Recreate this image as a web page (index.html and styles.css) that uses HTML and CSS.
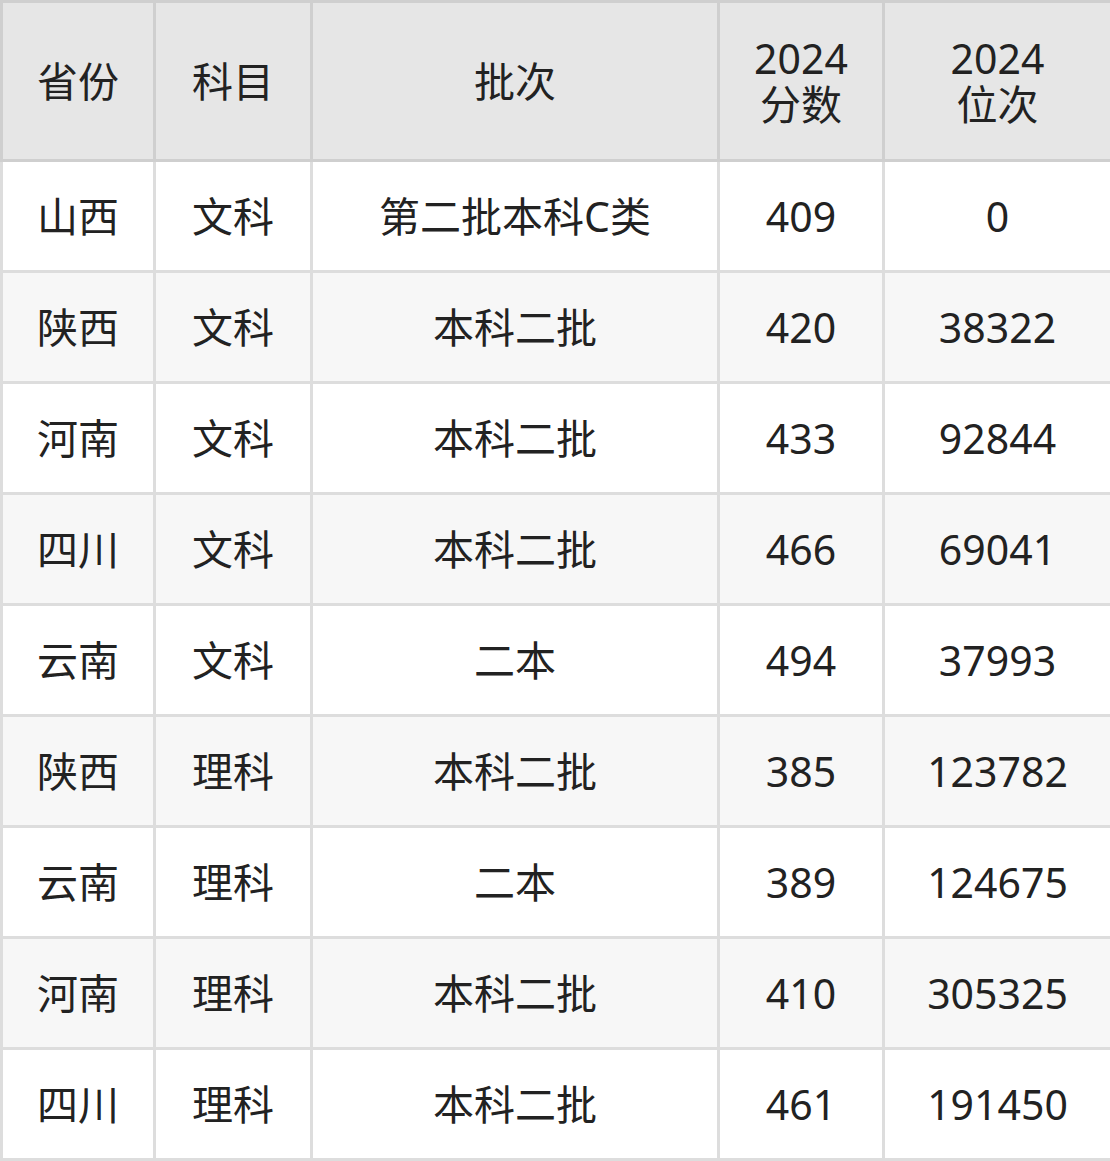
FILE: index.html
```html
<!DOCTYPE html>
<html lang="zh-CN">
<head>
<meta charset="utf-8">
<link rel="stylesheet" href="styles.css">
</head>
<body>
<table class="score-table">
  <colgroup>
    <col class="c1"><col class="c2"><col class="c3"><col class="c4"><col class="c5">
  </colgroup>
  <thead>
    <tr>
      <th>省份</th><th>科目</th><th>批次</th>
      <th><span class="hl">2024</span><span class="hl">分数</span></th>
      <th><span class="hl">2024</span><span class="hl">位次</span></th>
    </tr>
  </thead>
  <tbody>
    <tr><td>山西</td><td>文科</td><td>第二批本科C类</td><td>409</td><td>0</td></tr>
    <tr><td>陕西</td><td>文科</td><td>本科二批</td><td>420</td><td>38322</td></tr>
    <tr><td>河南</td><td>文科</td><td>本科二批</td><td>433</td><td>92844</td></tr>
    <tr><td>四川</td><td>文科</td><td>本科二批</td><td>466</td><td>69041</td></tr>
    <tr><td>云南</td><td>文科</td><td>二本</td><td>494</td><td>37993</td></tr>
    <tr><td>陕西</td><td>理科</td><td>本科二批</td><td>385</td><td>123782</td></tr>
    <tr><td>云南</td><td>理科</td><td>二本</td><td>389</td><td>124675</td></tr>
    <tr><td>河南</td><td>理科</td><td>本科二批</td><td>410</td><td>305325</td></tr>
    <tr><td>四川</td><td>理科</td><td>本科二批</td><td>461</td><td>191450</td></tr>
  </tbody>
</table>
</body>
</html>
```
FILE: styles.css
```css
html, body {
  margin: 0;
  padding: 0;
  background: #ffffff;
}

.score-table {
  width: 1110px;
  border-collapse: collapse;
  table-layout: fixed;
  font-family: "Noto Sans", "Noto Sans CJK SC", sans-serif;
  font-size: 41px;
  color: #222222;
}

.c1 { width: 153px; }
.c2 { width: 157px; }
.c3 { width: 407px; }
.c4 { width: 165px; }
.c5 { width: 228px; }

.score-table th,
.score-table td {
  text-align: center;
  vertical-align: middle;
  padding: 0;
  font-weight: normal;
}

.score-table th {
  background: #e6e6e6;
  border: 3px solid #cfcfcf;
  height: 156px;
  line-height: 48px;
}

.hl {
  display: block;
  line-height: 46px;
}

.score-table td {
  border: 3px solid #dddddd;
  height: 108px;
  line-height: 48px;
}

.score-table tbody tr:nth-child(even) td {
  background: #f7f7f7;
}
```
